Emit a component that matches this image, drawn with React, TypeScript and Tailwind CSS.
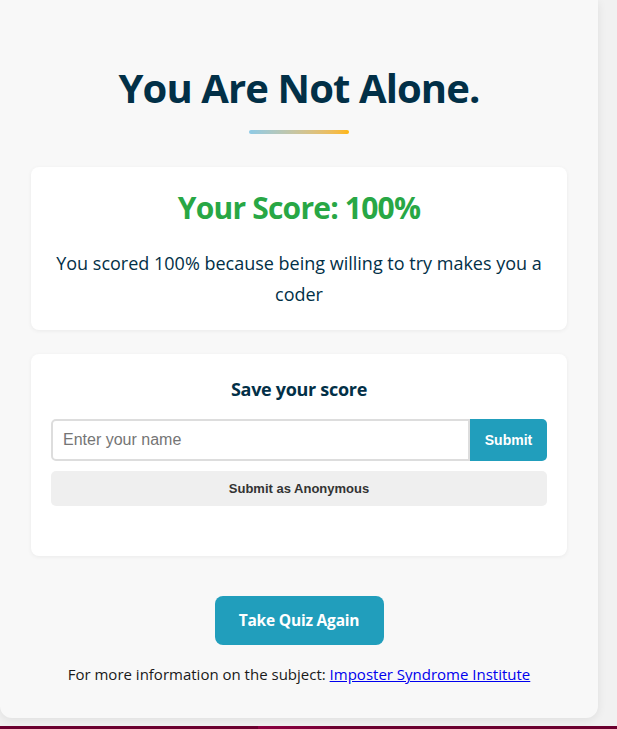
export default function App() {
  const sans = { fontFamily: '"Open Sans", "Noto Sans", sans-serif' };
  return (
    <div className="min-h-[729px] bg-[#f1f1f1] flex flex-col" style={sans}>
      <div className="w-[598px] bg-[#f8f8f8] rounded-b-xl shadow-[0_2px_10px_rgba(0,0,0,0.08)] px-[31px] pt-[64px] pb-[32px] flex flex-col items-center">
        <h1 className="text-[40px] leading-[48px] font-bold text-[#023047] tracking-[-0.9px]">
          You Are Not Alone.
        </h1>
        <div className="mt-[18px] w-[100px] h-1 rounded-full bg-gradient-to-r from-[#8ecae6] to-[#ffb703]" />

        <div className="mt-[33px] w-full bg-white rounded-lg shadow-[0_1px_4px_rgba(0,0,0,0.06)] px-5 pt-[22px] pb-5 text-center">
          <h2 className="text-[30px] leading-[38px] font-bold text-[#28a745] tracking-[-0.8px]">
            Your Score: 100%
          </h2>
          <p className="mt-[21px] text-[18px] leading-[31px] text-[#023047]">
            You scored 100% because being willing to try makes you a coder
          </p>
        </div>

        <div className="mt-6 w-full bg-white rounded-lg shadow-[0_1px_4px_rgba(0,0,0,0.06)] px-5 pt-[21px] pb-[50px]">
          <h3 className="text-center text-[18px] leading-[28px] font-bold text-[#023047] tracking-[-0.3px]">
            Save your score
          </h3>
          <div className="mt-4 flex h-[42px]" style={{ fontFamily: '"Liberation Sans", Arial, sans-serif' }}>
            <input
              className="flex-1 min-w-0 border-2 border-[#dddddd] rounded-l-[5px] px-[10px] text-[16px] text-[#333] placeholder:text-[#757575] outline-none bg-white"
              placeholder="Enter your name"
            />
            <button className="w-[77px] bg-[#219ebc] text-white text-[14px] font-bold rounded-r-[5px]">
              Submit
            </button>
          </div>
          <button
            className="mt-[10px] w-full h-[35px] bg-[#efefef] rounded-[5px] text-[13px] font-bold text-[#333]"
            style={{ fontFamily: '"Liberation Sans", Arial, sans-serif' }}
          >
            Submit as Anonymous
          </button>
        </div>

        <button className="mt-10 h-[49px] w-[169px] bg-[#219ebc] text-white text-[15.5px] font-bold rounded-lg tracking-[-0.2px]">
          Take Quiz Again
        </button>
        <p className="mt-[17px] text-[15px] leading-6 text-[#1a1a1a]">
          For more information on the subject:{' '}
          <a href="#" className="text-[#0000ee] underline">
            Imposter Syndrome Institute
          </a>
        </p>
      </div>
      <div className="mt-auto flex h-[3px]">
        <div className="w-[258px] bg-[#6b002f]" />
        <div className="w-[72px] bg-gradient-to-r from-[#8a0040] to-[#7a0038]" />
        <div className="flex-1 bg-[#6b002f]" />
      </div>
    </div>
  );
}
